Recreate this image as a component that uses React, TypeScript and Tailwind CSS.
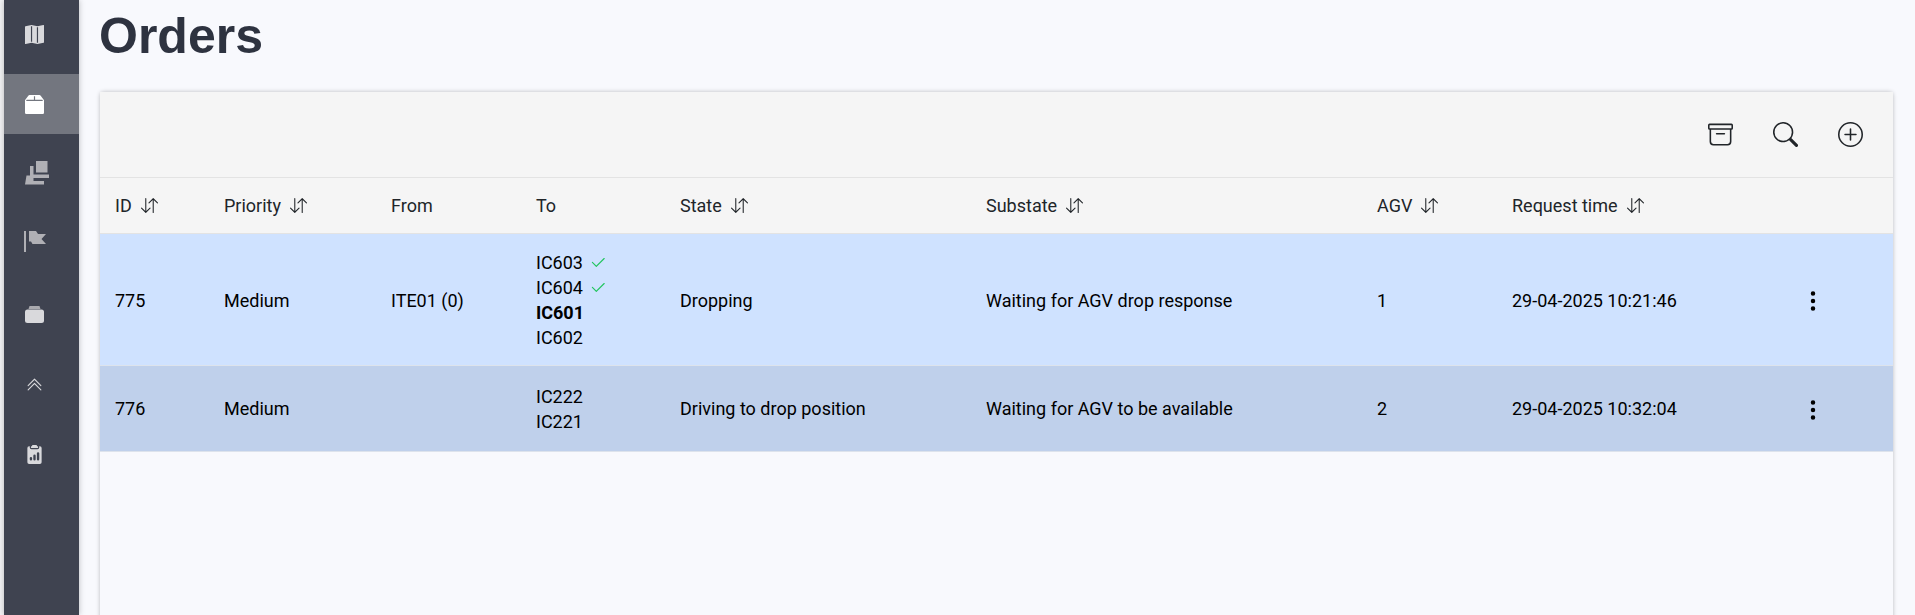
import {
  BsArchive,
  BsArrowDownUp,
  BsBox2Fill,
  BsCheck2,
  BsChevronDoubleUp,
  BsClipboard2DataFill,
  BsMapFill,
  BsPlusCircle,
  BsSearch,
  BsThreeDotsVertical,
} from "react-icons/bs";

function PalletIcon() {
  return (
    <svg width="24" height="24" viewBox="0 0 24 24" fill="#b0b0b5" className="ml-[6px] mb-[2px]">
      <path d="M11 0h11.5v11.5H11z" />
      <path d="M5 5h3.5v8.5H24V17H8.5v3H19v3.5H0l1.5-9H5z" />
    </svg>
  );
}

function FlagIcon() {
  return (
    <svg width="22" height="21" viewBox="0 0 22 21" fill="#b0b0b5" className="ml-[2px] mb-[5px]">
      <path d="M0 0h2v21H0z" />
      <path d="M5 0h7l2 3h8l-4.5 5 4.5 5H8.5L7 10.5H5z" />
    </svg>
  );
}

function StackIcon() {
  return (
    <svg width="19" height="17" viewBox="0 0 19 17" fill="#d9d9dc">
      <path d="M4.5 0h10l1 3h-12z" fill="#a9a9ae" />
      <rect x="0" y="3.5" width="19" height="13.5" rx="2.5" />
    </svg>
  );
}

const navItems = [
  <BsMapFill size={19} color="#d9d9dc" />,
  <BsBox2Fill size={19} color="#ffffff" />,
  <PalletIcon />,
  <FlagIcon />,
  <StackIcon />,
  <BsChevronDoubleUp size={17} color="#d9d9dc" />,
  <BsClipboard2DataFill size={19} color="#d9d9dc" />,
];

const cols = ["w-[109px]", "w-[167px]", "w-[145px]", "w-[144px]", "w-[306px]", "w-[391px]", "w-[135px]", "w-[290px]", "flex-1"];

const headers = [
  { label: "ID", sort: true },
  { label: "Priority", sort: true },
  { label: "From", sort: false },
  { label: "To", sort: false },
  { label: "State", sort: true },
  { label: "Substate", sort: true },
  { label: "AGV", sort: true },
  { label: "Request time", sort: true },
];

const orders = [
  {
    id: "775",
    from: "ITE01 (0)",
    to: [
      { name: "IC603", done: true },
      { name: "IC604", done: true },
      { name: "IC601", current: true },
      { name: "IC602" },
    ],
    state: "Dropping",
    substate: "Waiting for AGV drop response",
    agv: "1",
    time: "29-04-2025 10:21:46",
    rowClass: "bg-[#cfe2ff] h-[132px]",
    cellPad: "pt-[1px]",
  },
  {
    id: "776",
    from: "",
    to: [{ name: "IC222" }, { name: "IC221" }],
    state: "Driving to drop position",
    substate: "Waiting for AGV to be available",
    agv: "2",
    time: "29-04-2025 10:32:04",
    rowClass: "bg-[#bfd0eb] h-[86px]",
    cellPad: "pt-0",
  },
];

export default function App() {
  return (
    <div className="flex h-[615px] w-[1915px] overflow-hidden bg-[#f8f9fd] font-['Roboto',sans-serif]">
      {/* Sidebar */}
      <div className="w-[4px] bg-[#f3f3f5]" />
      <div className="flex w-[75px] flex-col gap-[10px] bg-[#3f4350] pt-[4px] shadow-[0_0_6px_rgba(0,0,0,0.25)]">
        {navItems.map((icon, i) => (
          <div key={i} className={`flex h-[60px] w-full items-center ${i === 1 ? "bg-[#73767f]" : ""}`}>
            <div className="flex w-[60px] justify-center">{icon}</div>
          </div>
        ))}
      </div>

      {/* Content */}
      <div className="flex-1 pl-[21px] pr-[22px]">
        <h1 className="ml-[-1px] font-['Liberation_Sans',sans-serif] text-[50px] font-bold leading-[72px] text-[#2e3340]">Orders</h1>
        <div className="mt-5 h-[600px] rounded-sm bg-[#f8f9fd] shadow-[0_0_4px_rgba(0,0,0,0.25)]">
          <div className="flex h-[86px] items-center justify-end gap-[40px] border-b border-[#e3e3e3] bg-[#f5f5f5] pr-[30px] text-[#212529]">
            <BsArchive size={25} />
            <BsSearch size={25} />
            <BsPlusCircle size={25} />
          </div>
          <div className="flex h-[56px] items-center border-b border-[#e3e3e3] bg-[#f5f5f5] text-[18px] text-[#212529]">
            {headers.map((h, i) => (
              <div key={h.label} className={`flex items-center pl-[15px] ${cols[i]}`}>
                {h.label}
                {h.sort && <BsArrowDownUp size={17} className="ml-[9px]" />}
              </div>
            ))}
          </div>
          {orders.map((o) => (
            <div key={o.id} className={`flex items-center border-b border-[#dde3ec] text-[18px] text-black ${o.rowClass}`}>
              <div className={`pl-[15px] ${o.cellPad} ${cols[0]}`}>{o.id}</div>
              <div className={`pl-[15px] ${o.cellPad} ${cols[1]}`}>Medium</div>
              <div className={`pl-[15px] ${o.cellPad} ${cols[2]}`}>{o.from}</div>
              <div className={`pl-[15px] ${cols[3]}`}>
                {o.to.map((t) => (
                  <div key={t.name} className={`flex h-[25px] items-center ${t.current ? "font-bold" : ""}`}>
                    {t.name}
                    {t.done && <BsCheck2 size={18} className="ml-[6px] mt-[1px] text-[#22c55e]" />}
                  </div>
                ))}
              </div>
              <div className={`pl-[15px] ${o.cellPad} ${cols[4]}`}>{o.state}</div>
              <div className={`pl-[15px] ${o.cellPad} ${cols[5]}`}>{o.substate}</div>
              <div className={`pl-[15px] ${o.cellPad} ${cols[6]}`}>{o.agv}</div>
              <div className={`pl-[15px] ${o.cellPad} ${cols[7]}`}>{o.time}</div>
              <div className="flex flex-1 pl-[14px] pt-[2px]">
                <BsThreeDotsVertical size={24} />
              </div>
            </div>
          ))}
        </div>
      </div>
    </div>
  );
}
